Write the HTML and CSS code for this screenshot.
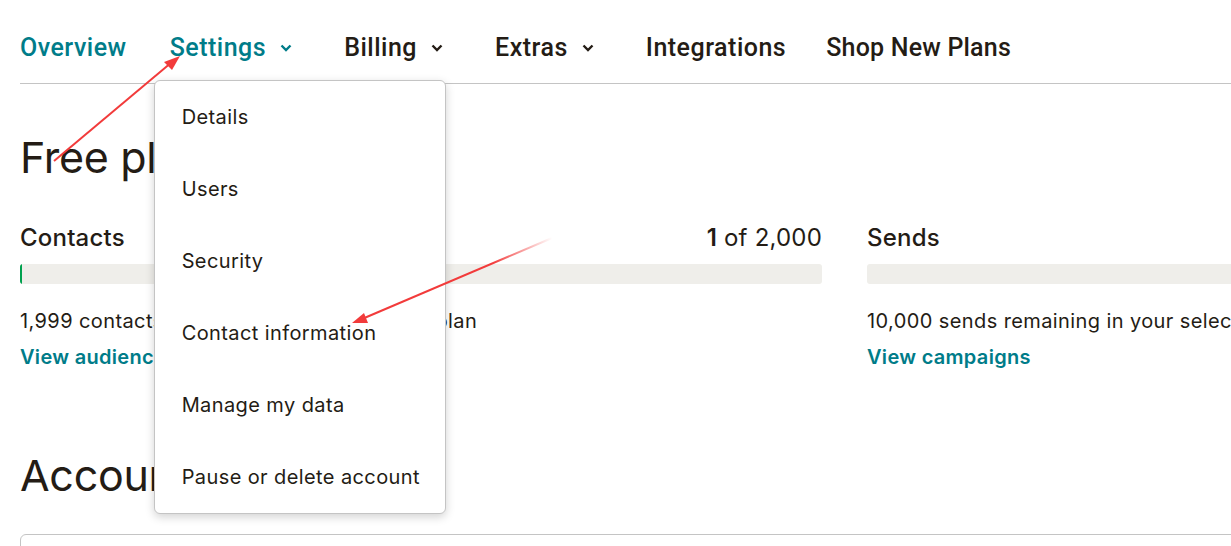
FILE: index.html
```html
<!DOCTYPE html>
<html lang="en">
<head>
<meta charset="utf-8">
<title>Account</title>
<link rel="stylesheet" href="styles.css">
</head>
<body>
<div class="page">
  <nav class="topnav">
    <a class="nav-item active">Overview</a>
    <div class="nav-item active has-menu">Settings<span class="chev"><svg viewBox="0 0 12 8" width="12" height="8"><path d="M1.5 1.5 L6 6 L10.5 1.5" fill="none" stroke="currentColor" stroke-width="2.4"/></svg></span>
      <ul class="menu">
        <li>Details</li>
        <li>Users</li>
        <li>Security</li>
        <li>Contact information</li>
        <li>Manage my data</li>
        <li>Pause or delete account</li>
      </ul>
    </div>
    <div class="nav-item">Billing<span class="chev"><svg viewBox="0 0 12 8" width="12" height="8"><path d="M1.5 1.5 L6 6 L10.5 1.5" fill="none" stroke="currentColor" stroke-width="2.4"/></svg></span></div>
    <div class="nav-item">Extras<span class="chev"><svg viewBox="0 0 12 8" width="12" height="8"><path d="M1.5 1.5 L6 6 L10.5 1.5" fill="none" stroke="currentColor" stroke-width="2.4"/></svg></span></div>
    <a class="nav-item">Integrations</a>
    <a class="nav-item shop">Shop New Plans</a>
  </nav>

  <h1 class="title">Free plan</h1>

  <section class="usage">
    <div class="usage-col">
      <div class="usage-head"><span class="usage-label">Contacts</span><span class="usage-count"><b>1</b> of 2,000</span></div>
      <div class="bar"><div class="bar-fill" style="width:2px"></div></div>
      <p class="usage-text">1,999 contacts remaining in your selected plan</p>
      <a class="link">View audience</a>
    </div>
    <div class="usage-col">
      <div class="usage-head"><span class="usage-label">Sends</span><span class="usage-count"><b>0</b> of 10,000</span></div>
      <div class="bar"></div>
      <p class="usage-text">10,000 sends remaining in your selected plan</p>
      <a class="link">View campaigns</a>
    </div>
  </section>

  <h1 class="title title-2">Account details</h1>
  <div class="card"></div>
</div>

<svg class="annot" width="1231" height="546" viewBox="0 0 1231 546">
  <defs>
    <linearGradient id="fade" x1="552" y1="238" x2="352" y2="323" gradientUnits="userSpaceOnUse">
      <stop offset="0" stop-color="#f23b3b" stop-opacity="0"/>
      <stop offset="0.3" stop-color="#f23b3b" stop-opacity="1"/>
      <stop offset="1" stop-color="#f23b3b" stop-opacity="1"/>
    </linearGradient>
  </defs>
  <line x1="54" y1="161" x2="172" y2="62" stroke="#f23b3b" stroke-width="2"/>
  <polygon points="180,56 164,62 172,70" fill="#f23b3b"/>
  <line x1="552" y1="238" x2="362" y2="319" stroke="url(#fade)" stroke-width="2"/>
  <polygon points="352,323 364,313 368,323" fill="#f23b3b"/>
</svg>
</body>
</html>
```

FILE: styles.css
```css
html, body {
  margin: 0;
  padding: 0;
  background: #fff;
  overflow: hidden;
}
body {
  width: 1231px;
  height: 546px;
  position: relative;
  font-family: Inter, "Open Sans", sans-serif;
  color: #241c15;
}
.page {
  width: 1649px;
  padding: 0 20px;
}
.topnav {
  display: flex;
  align-items: center;
  gap: 43px;
  height: 84px;
  padding-top: 12px;
  box-sizing: border-box;
  border-bottom: 1px solid #c4c4c4;
  width: 1211px;
}
.nav-item {
  position: relative;
  display: flex;
  align-items: center;
  font-family: Roboto, sans-serif;
  font-size: 25px;
  font-weight: 500;
  color: #241c15;
  text-decoration: none;
  letter-spacing: 0.5px;
}
.nav-item.shop {
  letter-spacing: 0.2px;
  margin-left: -3px;
}
.nav-item.active {
  color: #007c89;
}
.chev {
  display: inline-flex;
  justify-content: center;
  width: 20px;
  margin-left: 10px;
  margin-right: 5px;
  color: #241c15;
}
.nav-item.active .chev { color: #007c89; }
.menu {
  position: absolute;
  top: 47px;
  left: -16px;
  width: 290px;
  margin: 0;
  padding: 0;
  list-style: none;
  background: #fff;
  border: 1px solid #c4c4c4;
  border-radius: 6px;
  box-shadow: 0 3px 10px rgba(0,0,0,0.18);
  z-index: 5;
}
.menu li {
  height: 72px;
  display: flex;
  align-items: center;
  padding-left: 27px;
  font-family: Inter, sans-serif;
  font-size: 20px;
  font-weight: 400;
  color: #241c15;
  letter-spacing: 0.4px;
}
.title {
  margin: 47px 0 0;
  font-size: 43px;
  font-weight: 400;
  line-height: 52px;
  letter-spacing: -0.3px;
}
.usage {
  display: grid;
  grid-template-columns: 802px 802px;
  gap: 45px;
  margin-top: 39px;
}
.usage-head {
  display: flex;
  justify-content: space-between;
  align-items: center;
  height: 30px;
  font-size: 24px;
  letter-spacing: 0.2px;
}
.usage-label { font-weight: 500; }
.usage-count b { font-weight: 600; }
.bar {
  margin-top: 12px;
  height: 20px;
  background: #efeeea;
  border-radius: 3px;
  overflow: hidden;
}
.bar-fill {
  height: 100%;
  background: #00a14f;
}
.usage-text {
  margin: 25px 0 0;
  font-size: 20px;
  line-height: 24px;
  letter-spacing: 0.4px;
}
.link {
  display: block;
  margin-top: 12px;
  color: #007c89;
  font-size: 20px;
  font-weight: 600;
  line-height: 24px;
  letter-spacing: 0.3px;
}
.title-2 {
  margin-top: 80px;
}
.card {
  margin-top: 33px;
  height: 60px;
  border: 1px solid #c4c4c4;
  border-radius: 6px;
}
.annot {
  position: absolute;
  left: 0;
  top: 0;
  pointer-events: none;
  z-index: 10;
}
```
